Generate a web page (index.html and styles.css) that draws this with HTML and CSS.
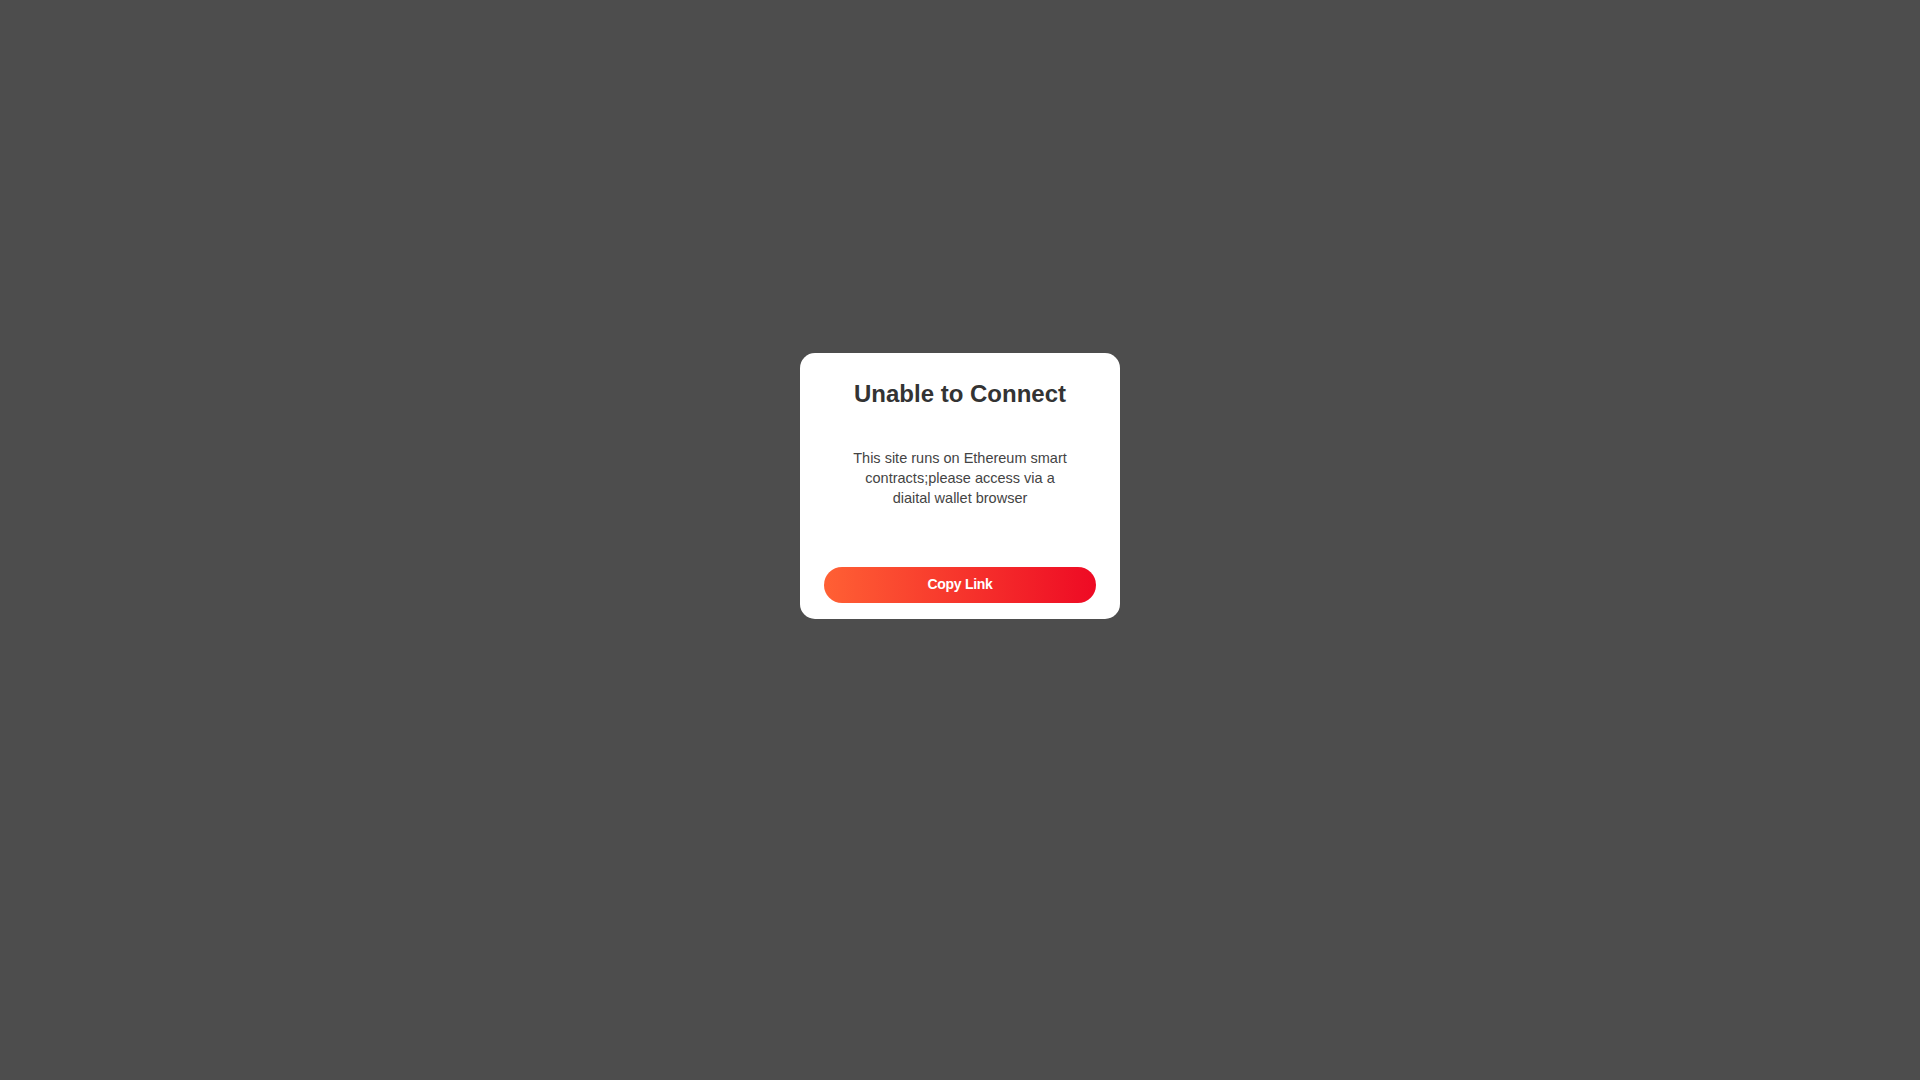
FILE: index.html
```html
<!DOCTYPE html>
<html lang="en">
<head>
<meta charset="utf-8">
<title>Unable to Connect</title>
<link rel="stylesheet" href="styles.css">
</head>
<body>
<div class="overlay">
  <div class="dialog">
    <div class="dialog-title">Unable to Connect</div>
    <div class="dialog-message">This site runs on Ethereum smart contracts;please access via a diaital wallet browser</div>
    <button class="dialog-button">Copy Link</button>
  </div>
</div>
</body>
</html>
```

FILE: styles.css
```css
html, body {
  margin: 0;
  padding: 0;
  height: 100%;
}
body {
  background: #4d4d4d;
  font-family: "Liberation Sans", Arial, sans-serif;
}
.overlay {
  box-sizing: border-box;
  height: 100vh;
  display: flex;
  align-items: center;
  justify-content: center;
  padding-bottom: 108px;
}
.dialog {
  width: 320px;
  background: #fff;
  border-radius: 15px;
  box-sizing: border-box;
  padding: 26px 24px 16px;
  display: flex;
  flex-direction: column;
  align-items: center;
}
.dialog-title {
  font-size: 24px;
  font-weight: bold;
  line-height: 30px;
  color: #333;
}
.dialog-message {
  margin-top: 39px;
  width: 224px;
  text-align: center;
  font-size: 14.5px;
  line-height: 20px;
  color: #444;
}
.dialog-button {
  margin-top: 59px;
  width: 100%;
  height: 36px;
  border: none;
  border-radius: 18px;
  background: linear-gradient(to right, #ff6034, #ee0a24);
  color: #fff;
  font-family: "Liberation Sans", Arial, sans-serif;
  font-size: 14px;
  font-weight: bold;
  letter-spacing: -0.3px;
  padding: 0 0 2px;
}
```
